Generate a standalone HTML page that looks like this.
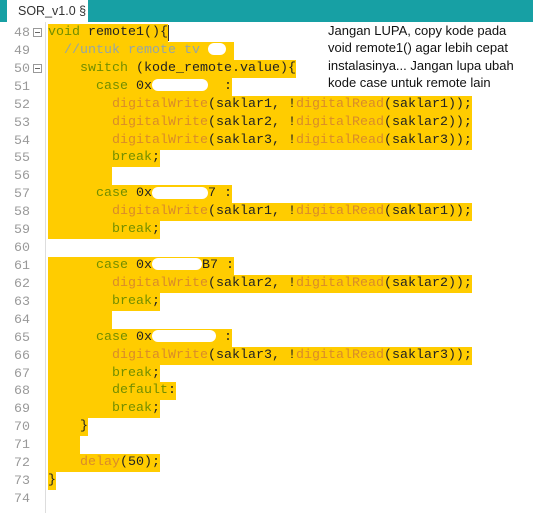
<!DOCTYPE html>
<html><head><meta charset="utf-8"><style>
*{margin:0;padding:0;box-sizing:border-box}
body{width:533px;height:513px;background:#fff;position:relative;overflow:hidden;font-family:"Liberation Mono",monospace}
.bar{position:absolute;left:0;top:0;width:533px;height:22px;background:#17a0a4}
.tab{position:absolute;left:7px;top:0;width:81px;height:22px;background:#fff;font:12.5px "Liberation Sans",sans-serif;color:#333;padding:4px 0 0 11px;white-space:nowrap}
.gut{position:absolute;left:45px;top:22px;width:1px;height:491px;background:#ddd}
.ln{position:absolute;left:0;height:18px;width:533px}
.num{position:absolute;left:0;width:30px;text-align:right;font-size:13.3px;color:#999;line-height:18px}
.fold{position:absolute;left:33px;top:4px;width:9px;height:9px;border:1px solid #999;background:#fff}
.fold:after{content:"";position:absolute;left:1px;top:3px;width:5px;height:1px;background:#666}
.code{position:absolute;left:48px;top:0;white-space:pre;font-size:13.33px;line-height:18px;color:#222}
.h{background:#ffcc00;display:inline-block;height:18px}
.k{color:#728e00}.f{color:#d98b2a}.c{color:#95a5a6}
.blob{display:inline-block;background:#fff;border-radius:6px;height:12px;vertical-align:middle}
.note{position:absolute;left:328px;top:22px;font:13px "Liberation Sans",sans-serif;color:#111;line-height:17.3px}
.cur{position:absolute;left:168px;top:25px;width:1px;height:16px;background:#333}
</style></head><body>
<div class="bar"></div><div class="tab">SOR_v1.0 §</div>
<div class="gut"></div>
<div class="ln" style="top:24px"><div class="num">48</div><div class="fold"></div><div class="code"><span class="h"><span class="k">void</span> remote1(){</span></div></div>
<div class="ln" style="top:41.9px"><div class="num">49</div><div class="code"><span class="h">  <span class="c">//untuk remote tv </span><span class="blob" style="width:18px"></span> </span></div></div>
<div class="ln" style="top:59.8px"><div class="num">50</div><div class="fold"></div><div class="code"><span class="h">    <span class="k">switch</span> (kode_remote.value){</span></div></div>
<div class="ln" style="top:77.8px"><div class="num">51</div><div class="code"><span class="h">      <span class="k">case</span> 0x<span class="blob" style="width:56px"></span>  :</span></div></div>
<div class="ln" style="top:95.7px"><div class="num">52</div><div class="code"><span class="h">        <span class="f">digitalWrite</span>(saklar1, !<span class="f">digitalRead</span>(saklar1));</span></div></div>
<div class="ln" style="top:113.6px"><div class="num">53</div><div class="code"><span class="h">        <span class="f">digitalWrite</span>(saklar2, !<span class="f">digitalRead</span>(saklar2));</span></div></div>
<div class="ln" style="top:131.5px"><div class="num">54</div><div class="code"><span class="h">        <span class="f">digitalWrite</span>(saklar3, !<span class="f">digitalRead</span>(saklar3));</span></div></div>
<div class="ln" style="top:149.4px"><div class="num">55</div><div class="code"><span class="h">        <span class="k">break</span>;</span></div></div>
<div class="ln" style="top:167.4px"><div class="num">56</div><div class="code"><span class="h">        </span></div></div>
<div class="ln" style="top:185.3px"><div class="num">57</div><div class="code"><span class="h">      <span class="k">case</span> 0x<span class="blob" style="width:56px"></span>7 :</span></div></div>
<div class="ln" style="top:203.2px"><div class="num">58</div><div class="code"><span class="h">        <span class="f">digitalWrite</span>(saklar1, !<span class="f">digitalRead</span>(saklar1));</span></div></div>
<div class="ln" style="top:221.1px"><div class="num">59</div><div class="code"><span class="h">        <span class="k">break</span>;</span></div></div>
<div class="ln" style="top:239px"><div class="num">60</div><div class="code"></div></div>
<div class="ln" style="top:257px"><div class="num">61</div><div class="code"><span class="h">      <span class="k">case</span> 0x<span class="blob" style="width:50px"></span>B7 :</span></div></div>
<div class="ln" style="top:274.9px"><div class="num">62</div><div class="code"><span class="h">        <span class="f">digitalWrite</span>(saklar2, !<span class="f">digitalRead</span>(saklar2));</span></div></div>
<div class="ln" style="top:292.8px"><div class="num">63</div><div class="code"><span class="h">        <span class="k">break</span>;</span></div></div>
<div class="ln" style="top:310.7px"><div class="num">64</div><div class="code"><span class="h">        </span></div></div>
<div class="ln" style="top:328.6px"><div class="num">65</div><div class="code"><span class="h">      <span class="k">case</span> 0x<span class="blob" style="width:64px"></span> :</span></div></div>
<div class="ln" style="top:346.6px"><div class="num">66</div><div class="code"><span class="h">        <span class="f">digitalWrite</span>(saklar3, !<span class="f">digitalRead</span>(saklar3));</span></div></div>
<div class="ln" style="top:364.5px"><div class="num">67</div><div class="code"><span class="h">        <span class="k">break</span>;</span></div></div>
<div class="ln" style="top:382.4px"><div class="num">68</div><div class="code"><span class="h">        <span class="k">default</span>:</span></div></div>
<div class="ln" style="top:400.3px"><div class="num">69</div><div class="code"><span class="h">        <span class="k">break</span>;</span></div></div>
<div class="ln" style="top:418.2px"><div class="num">70</div><div class="code"><span class="h">    }</span></div></div>
<div class="ln" style="top:436.2px"><div class="num">71</div><div class="code"><span class="h">    </span></div></div>
<div class="ln" style="top:454.1px"><div class="num">72</div><div class="code"><span class="h">    <span class="f">delay</span>(50);</span></div></div>
<div class="ln" style="top:472px"><div class="num">73</div><div class="code"><span class="h">}</span></div></div>
<div class="ln" style="top:489.9px"><div class="num">74</div><div class="code"></div></div>
<div class="cur"></div>
<div class="note">Jangan LUPA, copy kode pada<br>void remote1() agar lebih cepat<br>instalasinya... Jangan lupa ubah<br>kode case untuk remote lain</div>
</body></html>
